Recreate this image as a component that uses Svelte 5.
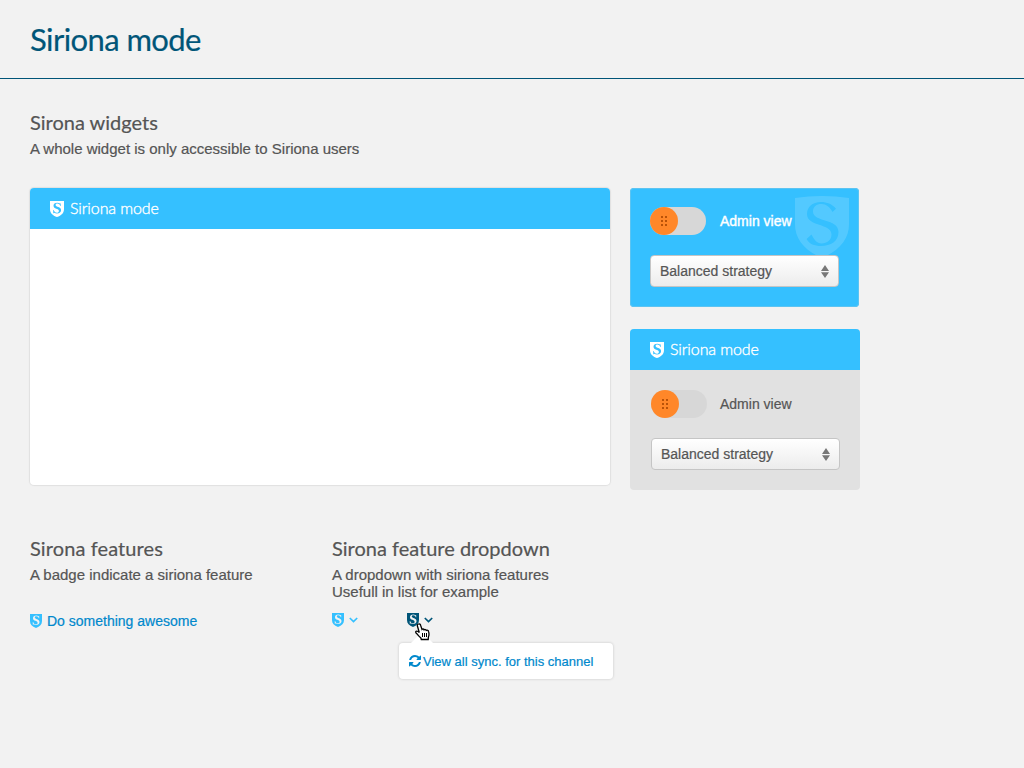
<script>
  const shield =
    'M0 2 Q27 -2 54 2 V28 C54 43 45 54 27 62 C9 54 0 43 0 28Z M41 12.7 C37 8 32 6 26 6 C17 6 12 11 12 18 C12 31 36.5 27 36.5 38.5 C36.5 44 32 47.5 26.5 47.5 C22 47.5 19 43.5 16.5 38.5 L11.5 43 C14.5 48 19 50 26 50 C36 50 43.5 45 43.5 36 C43.5 22 18 26.5 18 15.5 C18 10.5 21.5 8 26.5 8 C31 8 35 11 37.5 16Z';
  const smallShield =
    'M0 0 H14 V8 C14 12 11.5 14.500 7 16 C2.500 14.500 0 12 0 8Z M10.600 2.200 L10 2.600 C9.200 2.100 8.300 1.800 7.200 1.800 C4.900 1.800 3.500 3 3.500 4.800 C3.500 8.200 8.900 7.400 8.900 9.900 C8.900 11.100 8 11.700 6.900 11.700 C5.300 11.700 4.200 10.800 3.700 9.100 L3.200 9.100 L3.300 12.200 L3.800 12.200 L4.200 11.700 C5 12.200 5.900 12.500 7 12.500 C9.500 12.500 11.100 11.200 11.100 9.100 C11.100 5.700 5.600 6.300 5.600 4.100 C5.600 3.100 6.300 2.600 7.300 2.600 C8.800 2.600 9.900 3.500 10.300 4.900 L10.800 4.900Z';
</script>

{#snippet badge()}
  <svg class="badge" viewBox="0 0 14 16" preserveAspectRatio="none"><path fill-rule="evenodd" d={smallShield} /></svg>
{/snippet}

{#snippet controls()}
  <div class="toggle-row">
    <div class="toggle">
      <div class="knob">
        {#each Array(6) as _}<i></i>{/each}
      </div>
    </div>
    <span class="label">Admin view</span>
  </div>
  <div class="select">
    <span>Balanced strategy</span>
    <svg width="8" height="13" viewBox="0 0 8 13"><path d="M4 0 8 6H0ZM0 7.300H8L4 13Z" fill="#777" /></svg>
  </div>
{/snippet}

{#snippet chevron()}
  <svg class="chevron" width="9" height="6" viewBox="0 0 9 6"><path d="M.8 1 4.500 4.500 8.200 1" fill="none" stroke="currentColor" stroke-width="1.700" /></svg>
{/snippet}

<header><h1>Siriona mode</h1></header>
<main>
  <h2>Sirona widgets</h2>
  <p>A whole widget is only accessible to Siriona users</p>
  <div class="widgets">
    <section class="panel large">
      <div class="panel-head">{@render badge()}<span>Siriona mode</span></div>
    </section>
    <div class="side">
      <section class="card">
        <svg class="watermark" viewBox="0 0 54 62"><path fill-rule="evenodd" d={shield} /></svg>
        {@render controls()}
      </section>
      <section class="panel small">
        <div class="panel-head">{@render badge()}<span>Siriona mode</span></div>
        <div class="panel-body">{@render controls()}</div>
      </section>
    </div>
  </div>
  <div class="features">
    <section>
      <h2 class="wide">Sirona features</h2>
      <p>A badge indicate a siriona feature</p>
      <a class="feature">{@render badge()}<span>Do something awesome</span></a>
    </section>
    <section>
      <h2>Sirona feature dropdown</h2>
      <p>A dropdown with siriona features<br />Usefull in list for example</p>
      <div class="triggers">
        <div class="trigger">{@render badge()}{@render chevron()}</div>
        <div class="trigger open">
          {@render badge()}{@render chevron()}
          <div class="menu">
            <svg class="sync" width="12" height="12" viewBox="0 0 1536 1536"><path fill="#08c" d="M1511 928q0 5-1 7-64 268-268 434.500T764 1536q-146 0-282.500-55T238 1324l-129 129q-19 19-45 19t-45-19-19-45V960q0-26 19-45t45-19h448q26 0 45 19t19 45-19 45l-137 137q71 66 161 102t187 36q134 0 250-65t186-179q11-17 53-117 8-23 30-23h192q13 0 22.500 9.500t9.500 22.500zm25-800v448q0 26-19 45t-45 19h-448q-26 0-45-19t-19-45 19-45l138-138Q969 256 768 256q-134 0-250 65T332 500q-11 17-53 117-8 23-30 23H50q-13 0-22.500-9.500T18 608v-7q65-268 270-434.500T768 0q146 0 284 55.500T1297 212l130-129q19-19 45-19t45 19 19 45z" /></svg>
            <span>View all sync. for this channel</span>
          </div>
          <svg class="pointer" width="17" height="18" viewBox="0 0 17 18"><path d="M4.500 1 C5.500 .6 6.300 1.200 6.600 2.200 L8 6.400 C8.600 5.700 9.800 5.900 10.100 6.800 C10.800 6.200 12 6.500 12.300 7.400 C13.200 6.900 14.300 7.300 14.500 8.400 C15.200 10.500 15.300 12 14.400 14 L14.200 16.500 H7.300 L6.900 15.100 C5.500 13.900 4 12.300 2.800 10.700 C1.900 9.700 1.300 9 2.100 8.300 C3.200 7.600 4.300 8.500 5.300 9.500 L3.400 3 C3.100 2 3.500 1.300 4.500 1Z" fill="#fff" stroke="#000" stroke-width="1.300" /><path d="M8.500 10V14M10.500 10V14M12.500 10V14" stroke="#000" /></svg>
        </div>
      </div>
    </section>
  </div>
</main>

<style>
  :global(body) {
    margin: 0;
    background: #f2f2f2;
    color: #555;
    font: 15px/17px "Liberation Sans", Arial, sans-serif;
    -webkit-text-stroke: .2px currentColor;
  }
  header {
    box-sizing: border-box;
    height: 79px;
    padding: 19px 30px 0;
    border-bottom: 1px solid #005578;
  }
  h1, h2 { margin: 0; font-family: Lato, sans-serif; font-weight: 400; -webkit-text-stroke: .2px currentColor; }
  h1 { font-size: 31px; line-height: 40px; letter-spacing: -.58px; color: #005578; }
  h2 { font-size: 20px; line-height: 26px; }
  .wide { letter-spacing: .1px; }
  p { margin: 5px 0 0; white-space: nowrap; }
  main { box-sizing: border-box; min-height: calc(100vh - 79px); padding: 30px 30px 0; }
  .badge { width: 14px; height: 16px; fill: currentColor; flex: none; }
  .widgets { display: flex; align-items: flex-start; gap: 20px; margin-top: 31px; }
  .large {
    box-sizing: border-box;
    width: 580px;
    height: 297px;
    background: #fff;
    border-radius: 4px;
    box-shadow: 0 0 1px 1px #e0e0e0;
    overflow: hidden;
  }
  .panel-head {
    height: 41px;
    display: flex;
    align-items: center;
    gap: 6px;
    padding-left: 20px;
    color: #fff;
    background: #35c0ff;
    font: 300 16px/20px Lato, sans-serif;
    letter-spacing: -.1px;
    -webkit-text-stroke: .35px #fff;
  }
  .panel-head span { padding-bottom: 2px; }
  .side { display: flex; flex-direction: column; gap: 22px; }
  .card {
    position: relative;
    box-sizing: border-box;
    width: 229px;
    height: 119px;
    padding: 19px 20px;
    border-radius: 4px;
    background: #35c0ff;
    box-shadow: inset 0 0 0 1px #5cc4f2;
    overflow: hidden;
  }
  .card .label { color: #fff; -webkit-text-stroke: .4px #fff; }
  .watermark { position: absolute; right: 10px; top: 8px; width: 54px; height: 62px; fill: #fff; opacity: .15; }
  .small { width: 230px; height: 161px; border-radius: 4px; background: #e1e1e1; overflow: hidden; }
  .panel-body { padding: 20px 20px 0 21px; }
  .toggle-row { display: flex; align-items: center; gap: 14px; }
  .toggle { width: 56px; height: 28px; border-radius: 14px; background: #d7d7d7; }
  .panel-body .toggle-row { gap: 13px; }
  .knob {
    box-sizing: border-box;
    width: 28px;
    height: 28px;
    border-radius: 50%;
    background: #ff8729;
    display: grid;
    grid-template-columns: 2px 2px;
    gap: 2px;
    place-content: center;
  }
  .knob i { width: 2px; height: 2px; background: #b95208; }
  .label, .select { font-size: 14px; }
  .select {
    position: relative;
    box-sizing: border-box;
    width: 189px;
    height: 32px;
    margin-top: 20px;
    padding: 0 9px;
    display: flex;
    align-items: center;
    justify-content: space-between;
    border: 1px solid #c5c5c5;
    border-radius: 4px;
    background: linear-gradient(#fff, #ececec);
  }
  .features { display: flex; margin-top: 45px; }
  .features section { width: 302px; }
  .feature { display: flex; align-items: center; gap: 5px; margin-top: 30px; color: #08c; font-size: 14px; }
  .feature .badge, .trigger .badge { width: 12px; height: 14px; color: #35c0ff; }
  .feature .badge { margin-bottom: 2px; }
  .triggers { display: flex; gap: 49px; margin-top: 13px; }
  .trigger { position: relative; display: flex; align-items: center; gap: 5px; color: #35c0ff; }
  .trigger.open, .trigger.open .badge { color: #005578; }
  .menu {
    position: absolute;
    left: -8px;
    top: 30px;
    box-sizing: border-box;
    width: 214px;
    height: 36px;
    padding-left: 10px;
    display: flex;
    align-items: center;
    gap: 2px;
    white-space: nowrap;
    border-radius: 4px;
    background: #fff;
    box-shadow: 0 0 2px 1px #dcdcdc;
    color: #08c;
    font-size: 13px;
  }
  .menu::before {
    content: "";
    position: absolute;
    left: 12px;
    top: -11px;
    border: solid transparent;
    border-width: 0 11px 11px;
    border-bottom-color: #fff;
  }
  .pointer { position: absolute; left: 7px; top: 10px; }
</style>
